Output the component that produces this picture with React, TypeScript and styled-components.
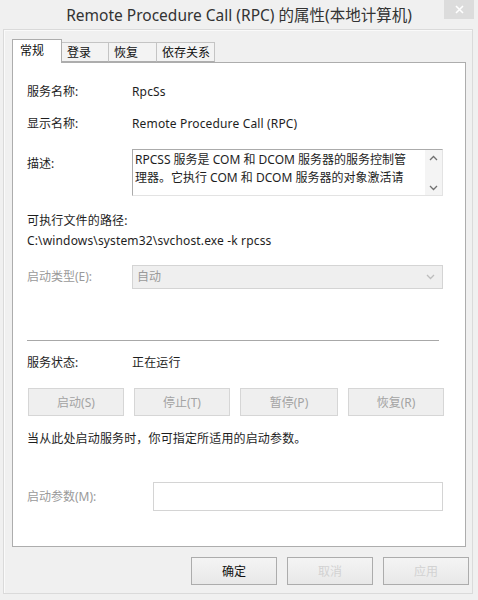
import React from "react";
import styled, { createGlobalStyle } from "styled-components";

const Global = createGlobalStyle`
  html, body { margin: 0; padding: 0; background: #f0f0f0; }
  body { font-family: "Noto Sans", "Noto Sans CJK SC", sans-serif; }
`;

const FONT = `"Noto Sans", "Noto Sans CJK SC", sans-serif`;

const Window = styled.div`
  position: relative;
  width: 478px;
  height: 600px;
  background: #f0f0f0;
  display: flex;
  flex-direction: column;
  font-family: ${FONT};
  font-size: 12px;
  color: #1e1e1e;
`;

const TitleBar = styled.div`
  height: 29px;
  display: flex;
  align-items: center;
  justify-content: center;
  font-size: 15.5px;
  color: #333;
  padding-bottom: 1px;
  box-sizing: border-box;
`;

const CloseBtn = styled.div`
  position: absolute;
  top: 0;
  right: 4px;
  width: 30px;
  height: 19px;
  background: #dcdcdc;
  display: flex;
  align-items: center;
  justify-content: center;
`;

const Frame = styled.div`
  flex: 1;
  margin: 0 5px 6px 3px;
  border: 1px solid #dadada;
  box-shadow: inset 1px 1px 0 #fafafa;
  padding: 9px 3px 0 8px;
  display: flex;
  flex-direction: column;
`;

const Tabs = styled.div`
  display: flex;
  align-items: flex-end;
  height: 23px;
  position: relative;
  z-index: 1;
`;

const Tab = styled.div<{ $active?: boolean; $w: number }>`
  box-sizing: border-box;
  width: ${(p) => p.$w}px;
  height: ${(p) => (p.$active ? 24 : 20)}px;
  margin-bottom: ${(p) => (p.$active ? -1 : 0)}px;
  padding: ${(p) => (p.$active ? "3px 0 0 7px" : "2px 0 0 5px")};
  background: ${(p) => (p.$active ? "#ffffff" : "#f3f3f3")};
  border: 1px solid ${(p) => (p.$active ? "#adadad" : "#c4c4c4")};
  border-bottom: ${(p) => (p.$active ? "none" : "1px solid #adadad")};
  border-left-width: ${(p) => (p.$active ? 1 : 0)}px;
  font-size: 12px;
  line-height: 16px;
  color: #111;
`;

const Panel = styled.div`
  box-sizing: border-box;
  width: 454px;
  height: 485px;
  margin-right: 3px;
  background: #fff;
  border: 1px solid #adadad;
  padding: 21px 22px 0 14px;
  display: flex;
  flex-direction: column;
`;

const Row = styled.div<{ $mt: number; $label?: number }>`
  display: grid;
  grid-template-columns: ${(p) => p.$label ?? 105}px 1fr;
  align-items: center;
  margin-top: ${(p) => p.$mt}px;
  line-height: 16px;
`;

const Label = styled.span<{ $disabled?: boolean }>`
  color: ${(p) => (p.$disabled ? "#9a9a9a" : "#1e1e1e")};
  white-space: nowrap;
`;

const Value = styled.span`
  white-space: nowrap;
  letter-spacing: 0.15px;
`;

const Line = styled.div<{ $mt: number }>`
  margin-top: ${(p) => p.$mt}px;
  line-height: 16px;
  white-space: nowrap;
  letter-spacing: 0.15px;
`;

const DescRow = styled.div`
  display: grid;
  grid-template-columns: 105px 1fr;
  align-items: start;
  margin-top: 17px;
`;

const DescLabel = styled.span`
  margin-top: 7px;
  line-height: 16px;
`;

const DescBox = styled.div`
  box-sizing: border-box;
  height: 47px;
  border: 1px solid #ababab;
  border-right-color: #e3e3e3;
  border-bottom-color: #e3e3e3;
  display: flex;
  overflow: hidden;
`;

const DescText = styled.div`
  flex: 1;
  padding: 1px 0 0 2px;
  line-height: 18px;
  white-space: nowrap;
`;

const ScrollCol = styled.div`
  width: 17px;
  background: #f4f4f4;
  display: flex;
  flex-direction: column;
  justify-content: space-between;
  align-items: center;
  padding: 5px 0 4px;
`;

const Select = styled.div`
  box-sizing: border-box;
  height: 24px;
  background: #efefef;
  border: 1px solid #d4d4d4;
  display: flex;
  align-items: center;
  justify-content: space-between;
  padding: 0 7px 0 4px;
  color: #9a9a9a;
`;

const Separator = styled.div`
  margin: 51px 4px 0 0;
  height: 1px;
  background: #a8a8a8;
`;

const ButtonGrid = styled.div`
  display: grid;
  grid-template-columns: 96px 96px 98px 96px;
  column-gap: 10px;
  margin: 17px 0 0 1px;
`;

const GrayButton = styled.div`
  box-sizing: border-box;
  height: 28px;
  background: #efefef;
  border: 1px solid #d6d6d6;
  display: flex;
  align-items: center;
  justify-content: center;
  color: #a3a3a3;
`;

const Input = styled.div`
  box-sizing: border-box;
  height: 29px;
  background: #fff;
  border: 1px solid #d4d4d4;
`;

const Footer = styled.div`
  display: flex;
  justify-content: flex-end;
  gap: 10px;
  margin-top: 10px;
`;

const DialogButton = styled.div<{ $faded?: boolean }>`
  box-sizing: border-box;
  width: 86px;
  height: 28px;
  background: linear-gradient(#f4f4f4, #e8e8e8);
  border: 1px solid #acacac;
  display: flex;
  align-items: center;
  justify-content: center;
  color: ${(p) => (p.$faded ? "#d2d2d2" : "#111")};
`;

const Chevron = ({ up, color }: { up?: boolean; color: string }) => (
  <svg width="9" height="6" viewBox="0 0 9 6">
    <path
      d={up ? "M1 5 L4.5 1.5 L8 5" : "M1 1 L4.5 4.5 L8 1"}
      fill="none"
      stroke={color}
      strokeWidth="1.3"
    />
  </svg>
);

export default function App() {
  return (
    <>
      <Global />
      <Window>
        <TitleBar>Remote Procedure Call (RPC) 的属性(本地计算机)</TitleBar>
        <CloseBtn>
          <svg width="9" height="9" viewBox="0 0 9 9">
            <path d="M1 1 L8 8 M8 1 L1 8" stroke="#fff" strokeWidth="1.6" />
          </svg>
        </CloseBtn>
        <Frame>
          <Tabs>
            <Tab $active $w={50}>常规</Tab>
            <Tab $w={47}>登录</Tab>
            <Tab $w={48}>恢复</Tab>
            <Tab $w={58}>依存关系</Tab>
          </Tabs>
          <Panel>
            <Row $mt={0}>
              <Label>服务名称:</Label>
              <Value>RpcSs</Value>
            </Row>
            <Row $mt={16}>
              <Label>显示名称:</Label>
              <Value>Remote Procedure Call (RPC)</Value>
            </Row>
            <DescRow>
              <DescLabel>描述:</DescLabel>
              <DescBox>
                <DescText>
                  RPCSS 服务是 COM 和 DCOM 服务器的服务控制管
                  <br />
                  理器。它执行 COM 和 DCOM 服务器的对象激活请
                </DescText>
                <ScrollCol>
                  <Chevron up color="#707070" />
                  <Chevron color="#707070" />
                </ScrollCol>
              </DescBox>
            </DescRow>
            <Line $mt={17}>可执行文件的路径:</Line>
            <Line $mt={4}>C:\windows\system32\svchost.exe -k rpcss</Line>
            <Row $mt={16}>
              <Label $disabled>启动类型(E):</Label>
              <Select>
                <span>自动</span>
                <Chevron color="#bdbdbd" />
              </Select>
            </Row>
            <Separator />
            <Row $mt={14}>
              <Label>服务状态:</Label>
              <Value>正在运行</Value>
            </Row>
            <ButtonGrid>
              <GrayButton>启动(S)</GrayButton>
              <GrayButton>停止(T)</GrayButton>
              <GrayButton>暂停(P)</GrayButton>
              <GrayButton>恢复(R)</GrayButton>
            </ButtonGrid>
            <Line $mt={15}>当从此处启动服务时，你可指定所适用的启动参数。</Line>
            <Row $mt={35} $label={126}>
              <Label $disabled>启动参数(M):</Label>
              <Input />
            </Row>
          </Panel>
          <Footer>
            <DialogButton>确定</DialogButton>
            <DialogButton $faded>取消</DialogButton>
            <DialogButton $faded>应用</DialogButton>
          </Footer>
        </Frame>
      </Window>
    </>
  );
}
